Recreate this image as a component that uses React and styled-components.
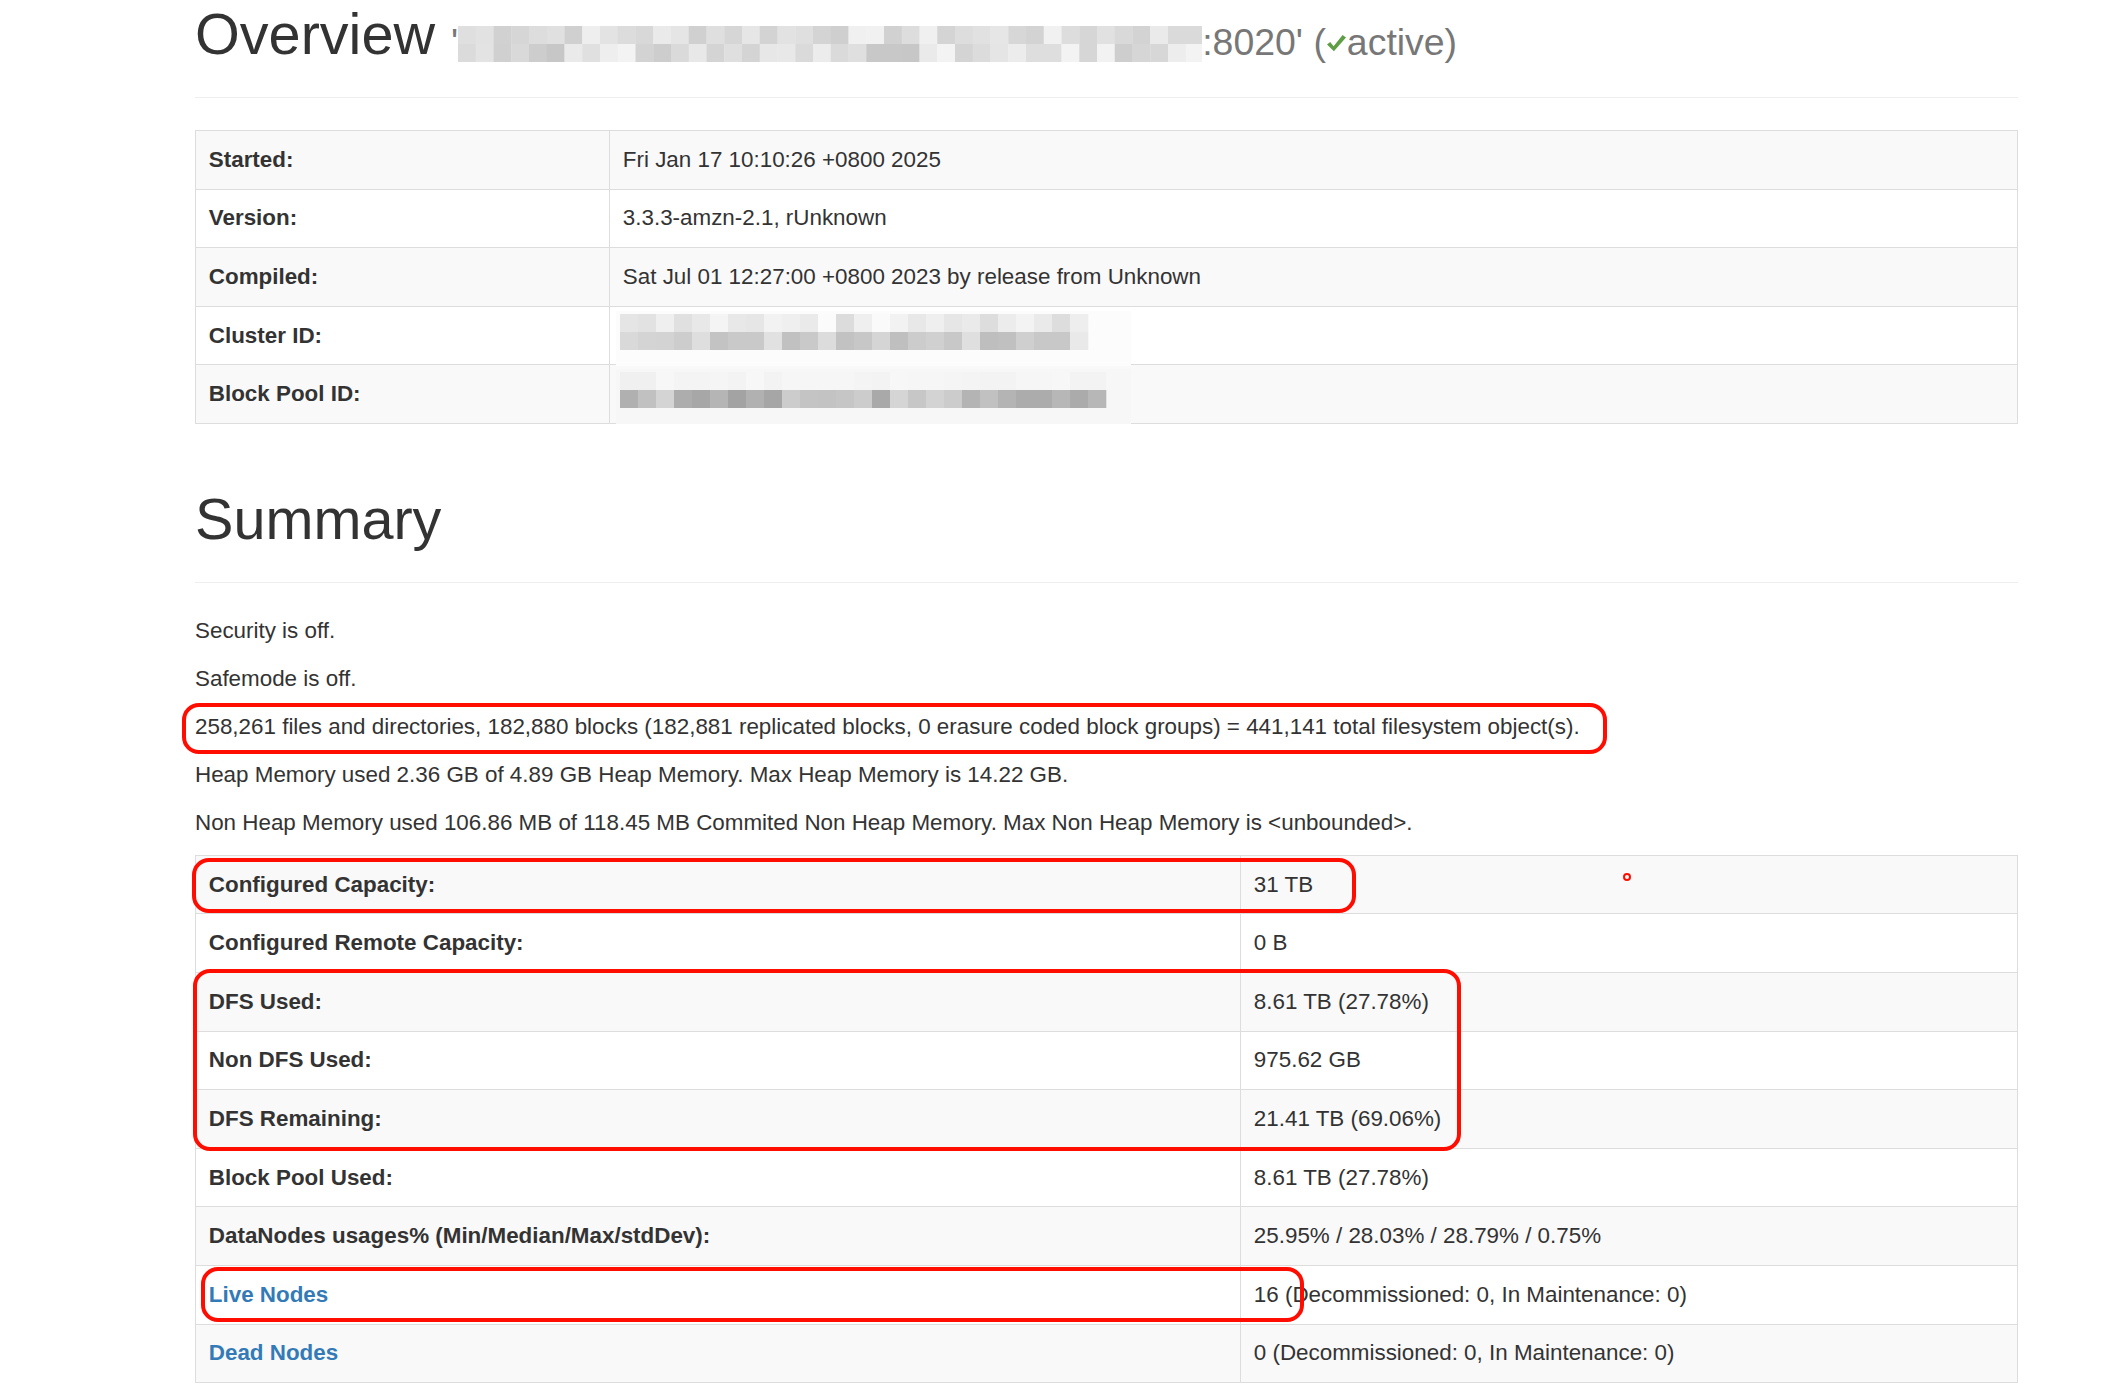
import React from 'react';
import styled, { createGlobalStyle } from 'styled-components';

const GlobalStyle = createGlobalStyle`
  html, body { margin: 0; padding: 0; background: #fff; }
  body {
    font-family: "Liberation Sans", Arial, Helvetica, sans-serif;
    font-size: 22.4px;
    line-height: 32px;
    color: #333;
    overflow: hidden;
  }
`;

const Page = styled.div`
  position: relative;
  height: 1386px;
  overflow: hidden;
  box-sizing: border-box;
  padding: 0 104px 0 195px;
`;

const PageHeader = styled.div`
  margin: ${(p) => (p.$first ? '3.2px' : '64px')} 0 32px;
  padding-bottom: 14.4px;
  border-bottom: 1px solid #eee;
`;

const H1 = styled.h1`
  margin: 0 0 16px;
  font-size: 57.6px;
  font-weight: 400;
  line-height: 63.4px;
  color: #333;
  white-space: nowrap;
`;

const Small = styled.small`
  font-size: 65%;
  color: #777;
  font-weight: 400;
  line-height: 1;
  position: relative;
  top: 1px;
`;

const InlineSvg = styled.svg`
  display: inline-block;
  vertical-align: ${(p) => p.$va}px;
`;

const BlockSvg = styled.svg`
  display: block;
  margin: -9px 0 -14px -7px;
`;

const Table = styled.table`
  width: 100%;
  table-layout: fixed;
  border-collapse: collapse;
  border-spacing: 0;
  border: 1px solid #ddd;
  margin-bottom: 32px;
  background: #fff;

  tbody tr:nth-of-type(odd) {
    background: #f9f9f9;
  }
`;

const Col = styled.col`
  width: ${(p) => p.$w}px;
`;

const Th = styled.th`
  text-align: left;
  font-weight: 700;
  padding: 12.8px;
  line-height: 32px;
  border: 1px solid #ddd;
  vertical-align: top;
  white-space: nowrap;
`;

const Td = styled.td`
  padding: 12.8px;
  line-height: 32px;
  border: 1px solid #ddd;
  vertical-align: top;
  white-space: nowrap;
`;

const Link = styled.a`
  color: #337ab7;
  text-decoration: none;
`;

const P = styled.p`
  margin: 0 0 16px;
  white-space: nowrap;
`;

const Annotation = styled.div`
  position: absolute;
  left: ${(p) => p.$x}px;
  top: ${(p) => p.$y}px;
  width: ${(p) => p.$w}px;
  height: ${(p) => p.$h}px;
  box-sizing: border-box;
  border: 4px solid #ff0d00;
  border-radius: 17px;
  pointer-events: none;
`;

const Dot = styled.div`
  position: absolute;
  left: 1623px;
  top: 873px;
  width: 8px;
  height: 8px;
  box-sizing: border-box;
  border: 2px solid #ff0d00;
  border-radius: 50%;
`;

function seeded(seed) {
  let s = seed;
  return () => {
    s = (s * 9301 + 49297) % 233280;
    return s / 233280;
  };
}

function makeRow(n, lo, hi, seed) {
  const r = seeded(seed);
  return Array.from({ length: n }, () => Math.round(lo + r() * (hi - lo)));
}

const gray = (v) => `rgb(${v},${v},${v})`;

function Mosaic({ rows, cell, rowH, offX = 0, offY = 0 }) {
  return rows.map((row, ri) =>
    row.map((v, ci) => (
      <rect
        key={`${ri}-${ci}`}
        x={offX + ci * cell}
        y={offY + ri * rowH}
        width={cell + 0.3}
        height={rowH}
        fill={gray(v)}
      />
    ))
  );
}

const hostRows = [makeRow(42, 0xcd, 0xf2, 7), makeRow(42, 0xc6, 0xf4, 31)];

const clusterRows = [
  [0xe5, 0xe2, 0xef, 0xe0, 0xe8, 0xf4, 0xe8, 0xe6, 0xf2, 0xef, 0xea, 0xfb, 0xdc, 0xef, 0xfa, 0xf2, 0xe8, 0xef, 0xe6, 0xea, 0xdd, 0xec, 0xf3, 0xea, 0xdd, 0xee],
  [0xd9, 0xd4, 0xd3, 0xcd, 0xde, 0xc3, 0xc9, 0xc9, 0xe1, 0xc1, 0xc9, 0xdc, 0xc2, 0xc7, 0xd5, 0xbf, 0xcc, 0xd0, 0xc8, 0xdf, 0xbe, 0xc0, 0xcf, 0xc8, 0xc8, 0xe9],
];

const poolRows = [
  [0xf0, 0xf0, 0xf7, 0xf4, 0xf4, 0xf5, 0xf3, 0xf7, 0xf3, 0xf6, 0xf6, 0xf6, 0xf6, 0xf4, 0xf3, 0xf7, 0xf6, 0xf6, 0xf5, 0xf4, 0xf3, 0xf3, 0xf6, 0xf6, 0xf7, 0xf3, 0xf3],
  [0xb0, 0xc1, 0xd4, 0xad, 0xa7, 0xb5, 0xa3, 0xb1, 0xa6, 0xcc, 0xc4, 0xc3, 0xc6, 0xcc, 0xa9, 0xd5, 0xc7, 0xd3, 0xcc, 0xb4, 0xc1, 0xb4, 0xac, 0xac, 0xb7, 0xab, 0xb7],
];

function Redacted({ rows, bg }) {
  return (
    <BlockSvg width="515" height="55" viewBox="0 0 515 55">
      <rect width="515" height="55" fill={bg} />
      <Mosaic rows={rows} cell={18} rowH={18} offX={4} offY={3} />
    </BlockSvg>
  );
}

function Check() {
  return (
    <InlineSvg $va={3} width="21" height="18" viewBox="0 0 21 18">
      <path d="M1 10.5 L4.2 8 L7.6 12.2 L16.6 1 L20 3.4 L7.9 17.2 Z" fill="#5f9e45" />
    </InlineSvg>
  );
}

const overviewRows = [
  ['Started:', 'Fri Jan 17 10:10:26 +0800 2025'],
  ['Version:', '3.3.3-amzn-2.1, rUnknown'],
  ['Compiled:', 'Sat Jul 01 12:27:00 +0800 2023 by release from Unknown'],
  ['Cluster ID:', { redact: clusterRows, bg: '#fcfcfc' }],
  ['Block Pool ID:', { redact: poolRows, bg: '#f7f7f7' }],
];

const summaryLines = [
  'Security is off.',
  'Safemode is off.',
  '258,261 files and directories, 182,880 blocks (182,881 replicated blocks, 0 erasure coded block groups) = 441,141 total filesystem object(s).',
  'Heap Memory used 2.36 GB of 4.89 GB Heap Memory. Max Heap Memory is 14.22 GB.',
  'Non Heap Memory used 106.86 MB of 118.45 MB Commited Non Heap Memory. Max Non Heap Memory is <unbounded>.',
];

const summaryRows = [
  ['Configured Capacity:', '31 TB'],
  ['Configured Remote Capacity:', '0 B'],
  ['DFS Used:', '8.61 TB (27.78%)'],
  ['Non DFS Used:', '975.62 GB'],
  ['DFS Remaining:', '21.41 TB (69.06%)'],
  ['Block Pool Used:', '8.61 TB (27.78%)'],
  ['DataNodes usages% (Min/Median/Max/stdDev):', '25.95% / 28.03% / 28.79% / 0.75%'],
  [{ link: 'Live Nodes' }, '16 (Decommissioned: 0, In Maintenance: 0)'],
  [{ link: 'Dead Nodes' }, '0 (Decommissioned: 0, In Maintenance: 0)'],
];

const annotations = [
  { x: 182, y: 703, w: 1425, h: 51 },
  { x: 192, y: 858, w: 1164, h: 55 },
  { x: 193, y: 969, w: 1268, h: 182 },
  { x: 201, y: 1267, w: 1103, h: 55 },
];

export default function App() {
  return (
    <>
      <GlobalStyle />
      <Page>
        <PageHeader $first>
          <H1>
            Overview{' '}
            <Small>
              '
              <InlineSvg $va={-7} width="744" height="36" viewBox="0 0 744 36">
                <Mosaic rows={hostRows} cell={17.75} rowH={18} />
              </InlineSvg>
              :8020' (<Check />active)
            </Small>
          </H1>
        </PageHeader>

        <Table>
          <colgroup>
            <Col $w={414} />
            <Col />
          </colgroup>
          <tbody>
            {overviewRows.map(([k, v]) => (
              <tr key={k}>
                <Th>{k}</Th>
                <Td>{typeof v === 'string' ? v : <Redacted rows={v.redact} bg={v.bg} />}</Td>
              </tr>
            ))}
          </tbody>
        </Table>

        <PageHeader>
          <H1>Summary</H1>
        </PageHeader>

        {summaryLines.map((l) => (
          <P key={l}>{l}</P>
        ))}

        <Table>
          <colgroup>
            <Col $w={1045} />
            <Col />
          </colgroup>
          <tbody>
            {summaryRows.map(([k, v], i) => (
              <tr key={i}>
                <Th>{typeof k === 'string' ? k : <Link href="#">{k.link}</Link>}</Th>
                <Td>{v}</Td>
              </tr>
            ))}
          </tbody>
        </Table>

        {annotations.map((a, i) => (
          <Annotation key={i} $x={a.x} $y={a.y} $w={a.w} $h={a.h} />
        ))}
        <Dot />
      </Page>
    </>
  );
}
